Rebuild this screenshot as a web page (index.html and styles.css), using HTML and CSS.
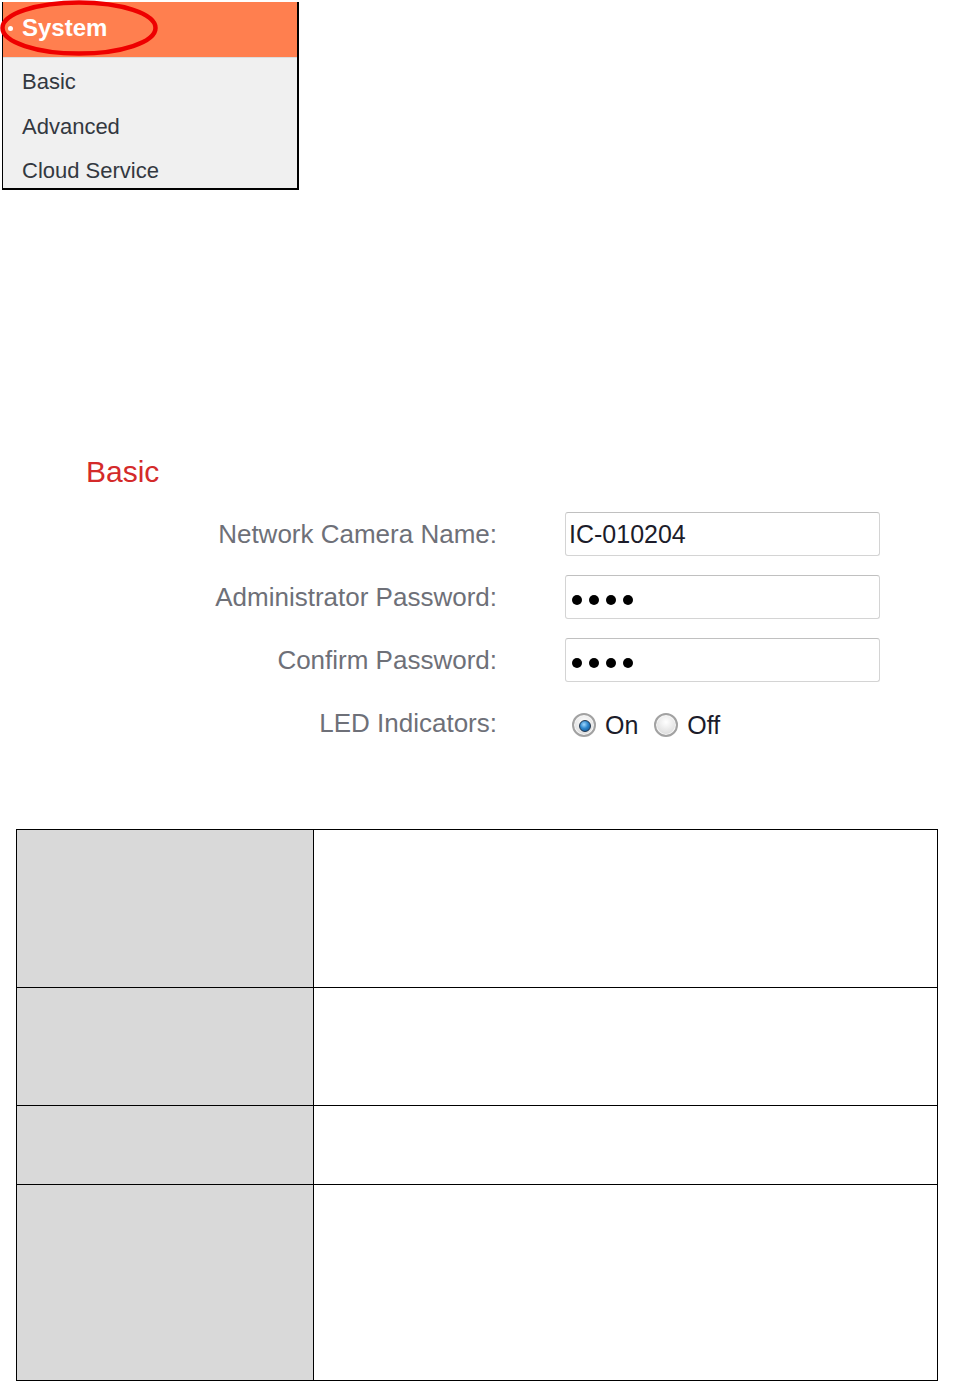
FILE: index.html
```html
<!DOCTYPE html>
<html lang="en">
<head>
<meta charset="utf-8">
<title>System - Basic</title>
<link rel="stylesheet" href="styles.css">
</head>
<body>
<nav class="menu">
  <div class="menu-head">
    <span class="bullet"></span>System
    <svg class="mark" width="162" height="60" viewBox="0 0 162 60" aria-hidden="true">
      <ellipse cx="79" cy="28" rx="76.5" ry="25.5" fill="none" stroke="#ee0000" stroke-width="4.5"/>
    </svg>
  </div>
  <ul class="menu-list">
    <li>Basic</li>
    <li>Advanced</li>
    <li>Cloud Service</li>
  </ul>
</nav>

<section class="basic">
  <h2 class="basic-title">Basic</h2>
  <div class="form">
    <label class="label">Network Camera Name:</label>
    <div class="field">IC-010204</div>

    <label class="label">Administrator Password:</label>
    <div class="field pw"><span class="dot"></span><span class="dot"></span><span class="dot"></span><span class="dot"></span></div>

    <label class="label">Confirm Password:</label>
    <div class="field pw"><span class="dot"></span><span class="dot"></span><span class="dot"></span><span class="dot"></span></div>

    <label class="label">LED Indicators:</label>
    <div class="options">
      <span class="radio checked"></span><span class="opt">On</span>
      <span class="radio"></span><span class="opt">Off</span>
    </div>
  </div>
</section>

<table class="grid">
  <tr class="r1"><td class="key"></td><td class="val"></td></tr>
  <tr class="r2"><td class="key"></td><td class="val"></td></tr>
  <tr class="r3"><td class="key"></td><td class="val"></td></tr>
  <tr class="r4"><td class="key"></td><td class="val"></td></tr>
</table>
</body>
</html>
```

FILE: styles.css
```css
* { box-sizing: border-box; }

body {
  margin: 0;
  background: #ffffff;
  font-family: "Liberation Sans", Arial, sans-serif;
}

/* ---------- menu ---------- */
.menu {
  position: relative;
  width: 297px;
  margin: 2px 0 0 2px;
  border-left: 1px solid #000;
  border-right: 2px solid #000;
  border-bottom: 2px solid #000;
  background: #f0f0f0;
}

.menu-head {
  position: relative;
  display: flex;
  align-items: center;
  height: 56px;
  padding-left: 19px;
  padding-bottom: 4px;
  background: #ff7f4f;
  border-bottom: 1px solid #dcdcdc;
  color: #ffffff;
  font-weight: bold;
  font-size: 24px;
}

.bullet {
  position: absolute;
  left: 5px;
  top: 24px;
  width: 5px;
  height: 5px;
  border-radius: 50%;
  background: #ffffff;
}

.mark {
  position: absolute;
  left: -3px;
  top: -2px;
}

.menu-list {
  list-style: none;
  margin: 0;
  padding: 1px 0 0 0;
  height: 130px;
  overflow: hidden;
}

.menu-list li {
  height: 44.5px;
  line-height: 45px;
  padding-left: 19px;
  font-size: 22px;
  color: #333840;
}

/* ---------- basic form ---------- */
.basic {
  margin-top: 265px;
}

.basic-title {
  margin: 0 0 23px 86px;
  font-size: 30px;
  line-height: 34px;
  font-weight: normal;
  color: #d42a2a;
}

.form {
  display: grid;
  grid-template-columns: 497px 315px;
  grid-auto-rows: 44px;
  column-gap: 68px;
  row-gap: 19px;
  align-items: center;
}

.label {
  text-align: right;
  font-size: 26px;
  line-height: 30px;
  color: #6e7078;
}

.field {
  display: flex;
  align-items: center;
  height: 44px;
  padding-left: 3px;
  border: 1px solid #d4d4d4;
  border-top-color: #c0c0c0;
  border-radius: 3px;
  background: #ffffff;
  font-size: 25px;
  color: #1c1c2a;
}

.pw {
  padding-left: 6px;
  padding-top: 6px;
  gap: 7px;
}

.dot {
  width: 10px;
  height: 10px;
  border-radius: 50%;
  background: #000000;
}

.options {
  display: flex;
  align-items: center;
  padding-left: 7px;
  font-size: 25px;
  color: #1c1c2a;
  margin-top: 4px;
}

.radio {
  position: relative;
  width: 24px;
  height: 24px;
  border-radius: 50%;
  border: 2px solid #a2a2a2;
  background: radial-gradient(circle at 50% 35%, #ffffff 0%, #e4e4e4 60%, #cfcfcf 100%);
  box-shadow: inset 0 0 0 1px #f6f6f6;
}

.radio.checked::after {
  content: "";
  position: absolute;
  left: 5px;
  top: 5px;
  width: 10px;
  height: 10px;
  border-radius: 50%;
  border: 1px solid #20364e;
  background: radial-gradient(circle at 40% 35%, #9fd8ff 0%, #2d86cc 45%, #0e4a86 100%);
}

.opt {
  margin-left: 9px;
  margin-right: 16px;
}

/* ---------- table ---------- */
.grid {
  margin: 84px 0 0 16px;
  width: 922px;
  border-collapse: collapse;
  table-layout: fixed;
}

.grid td {
  border: 1px solid #000000;
  padding: 0;
}

.grid .key {
  width: 297px;
  background: #d9d9d9;
}

.grid .val {
  background: #ffffff;
}

.r1 td { height: 158px; }
.r2 td { height: 118px; }
.r3 td { height: 79px; }
.r4 td { height: 196px; }
```
